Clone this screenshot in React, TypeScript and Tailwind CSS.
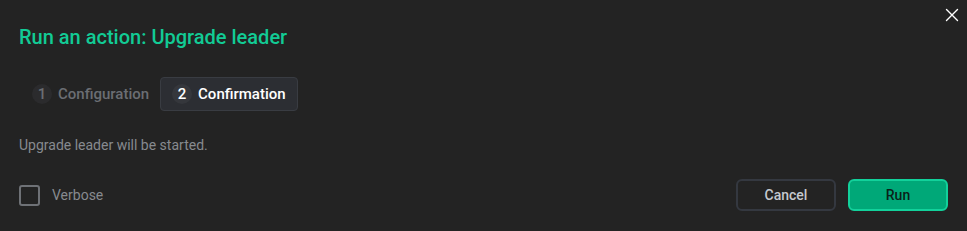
import React from "react";

export default function App() {
  return (
    <div
      className="relative w-[967px] h-[231px] bg-[#232323] px-[19px] pt-[24px]"
      style={{ fontFamily: "Roboto, 'Noto Sans', sans-serif" }}
    >
      <button className="absolute right-[8px] top-[8px] w-[14px] h-[14px] flex items-center justify-center">
        <svg width="14" height="14" viewBox="0 0 14 14" fill="none">
          <path d="M1.5 1.5L12.5 12.5M12.5 1.5L1.5 12.5" stroke="#ffffff" strokeWidth="1.4" strokeLinecap="round" />
        </svg>
      </button>
      <h1 className="text-[20px] leading-[26px] font-medium text-[#12cb95]">Run an action: Upgrade leader</h1>
      <div className="mt-[27px] flex items-center">
        <div className="h-[34px] flex items-center gap-[6px] pl-[12px] pr-[10px] rounded-[4px] border border-transparent">
          <span className="w-[20px] h-[20px] rounded-full bg-[#2b2b2d] flex items-center justify-center text-[15px] font-medium text-[#6b6e73]">1</span>
          <span className="text-[15px] font-medium text-[#6b6e73]">Configuration</span>
        </div>
        <div className="h-[34px] flex items-center gap-[6px] px-[11px] rounded-[4px] border border-[#393c42] bg-[#2c2e33]">
          <span className="w-[20px] h-[20px] rounded-full bg-[#35373c] flex items-center justify-center text-[15px] font-medium text-white">2</span>
          <span className="text-[15px] font-medium text-white">Confirmation</span>
        </div>
      </div>
      <p className="mt-[24px] text-[14px] leading-[20px] text-[#878a8f]">Upgrade leader will be started.</p>
      <div className="mt-[24px] flex items-center justify-between">
        <label className="flex items-center gap-[12px]">
          <span className="w-[21px] h-[21px] rounded-[3px] border-2 border-[#6e7176]" />
          <span className="text-[14px] text-[#878a8f]">Verbose</span>
        </label>
        <div className="flex items-center gap-[12px]">
          <button className="w-[100px] h-[32px] rounded-[6px] border-2 border-[#343840] text-[14px] font-medium text-[#c5c9cf]">Cancel</button>
          <button className="w-[100px] h-[32px] rounded-[6px] border-2 border-[#12d19b] bg-[#00a878] text-[14px] font-medium text-[#0b2219]">Run</button>
        </div>
      </div>
    </div>
  );
}
